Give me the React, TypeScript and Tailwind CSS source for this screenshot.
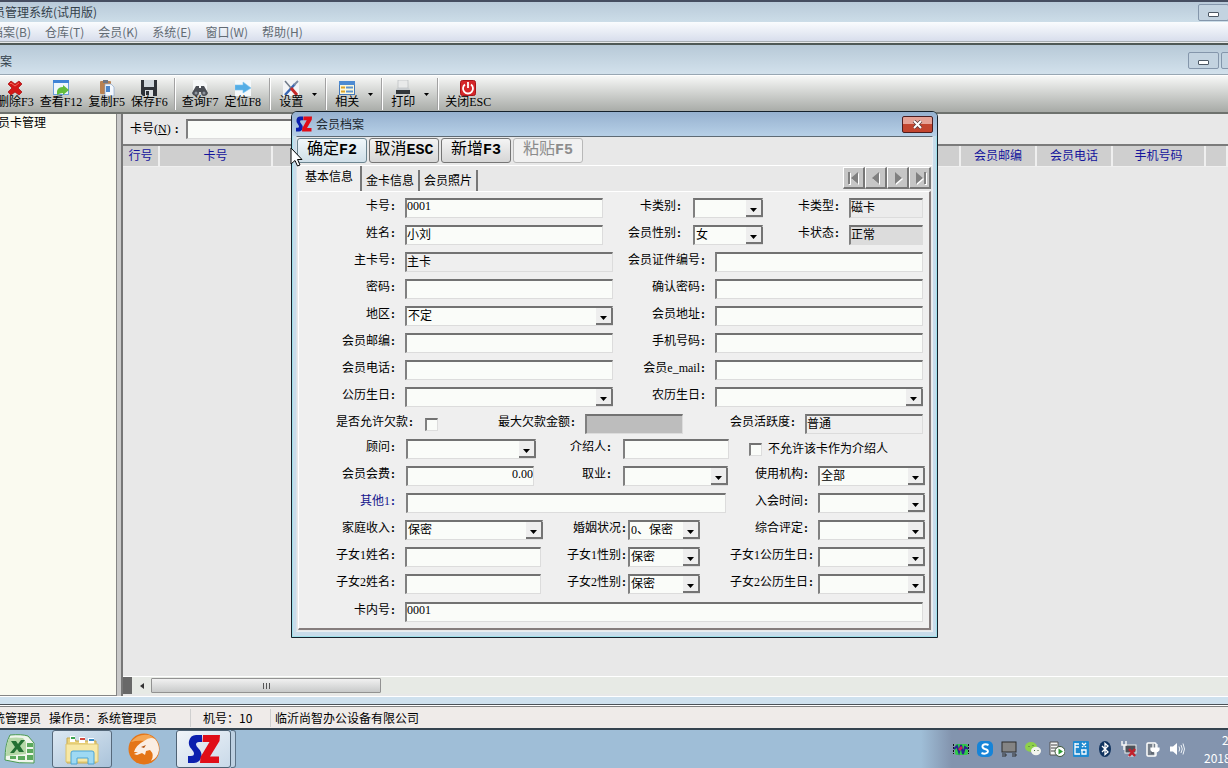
import { useId } from 'react';
import type { ReactNode } from 'react';

const song = "font-['Liberation_Serif','Noto_Sans_CJK_SC',serif]";
const yahei = "font-['Noto_Sans_CJK_SC',sans-serif]";
const sunken =
  'h-5 border-t-2 border-l-2 border-r border-b border-t-[#727272] border-l-[#808080] border-r-[#dcdcdc] border-b-[#dcdcdc] outline-none';

function Label({ id, width, text, blue }: { id: string; width: string; text: string; blue?: boolean }) {
  return (
    <label
      htmlFor={id}
      className={`${width} shrink-0 whitespace-nowrap pr-px pb-1 text-right leading-4 ${blue ? 'text-[#14148c]' : 'text-black'}`}
    >
      {text}
      <span className="inline-block w-1.5 text-center font-bold">:</span>
    </label>
  );
}

type FieldProps = {
  label: string;
  labelWidth: string;
  width: string;
  value?: string;
  gap?: string;
  bg?: string;
  right?: boolean;
  blue?: boolean;
  readOnly?: boolean;
  type?: string;
};

function TextField({ label, labelWidth, width, value = '', gap = 'gap-2', bg = 'bg-[#fafcf9]', right, blue, readOnly, type = 'text' }: FieldProps) {
  const id = useId();
  return (
    <div className={`flex items-center ${gap}`}>
      <Label id={id} width={labelWidth} text={label} blue={blue} />
      <input
        id={id}
        type={type}
        defaultValue={value}
        readOnly={readOnly}
        className={`${sunken} ${width} ${bg} pb-1 leading-4 ${right ? 'text-right' : ''}`}
      />
    </div>
  );
}

function SelectField({ label, labelWidth, width, value = '', gap = 'gap-2' }: FieldProps) {
  const id = useId();
  return (
    <div className={`flex items-center ${gap}`}>
      <Label id={id} width={labelWidth} text={label} />
      <div className={`relative ${width}`}>
        <select id={id} className={`${sunken} block w-full appearance-none bg-[#fafcf9] pb-[3px] pl-px leading-4`}>
          <option>{value}</option>
        </select>
        <span className="pointer-events-none absolute top-0.5 right-0 flex h-[17px] w-[17px] items-center justify-center border-r-2 border-b-2 border-[#747474] bg-[#eeeeee]">
          <svg width="7" height="4" viewBox="0 0 7 4" className="mt-1">
            <path d="M0 0H7L3.5 4Z" fill="#000" />
          </svg>
        </span>
      </div>
    </div>
  );
}

function Check({ id }: { id: string }) {
  return (
    <input
      id={id}
      type="checkbox"
      className="h-[13px] w-[13px] appearance-none border-t-2 border-l-2 border-r border-b border-t-[#727272] border-l-[#808080] border-r-[#dddddd] border-b-[#dddddd] bg-[#fafcf9]"
    />
  );
}

function SZ({ size }: { size: 'small' | 'large' }) {
  return (
    <svg viewBox="0 0 32 30" className={size === 'small' ? 'h-4 w-4' : 'h-[30px] w-8'} preserveAspectRatio="none">
      <path
        d="M14 1V8H11Q8 8 8 10.500Q8 12 10.500 14.500Q14 18 13.500 22.500Q12 29 6 29H0V22H3Q6 22 6 19.500Q6 18 3.500 15Q0 11.500 1 7Q2.500 1 8 1Z"
        fill="#0b20ae"
      />
      <path d="M15 1H32L31.500 7L22 22.500H31V29H12L12.500 23L21.500 8H14.500Z" fill="#e00d18" />
    </svg>
  );
}

/* ---------- toolbar ---------- */

const DeleteIcon = (
  <svg width="16" height="16" viewBox="0 0 16 16">
    <path d="M1 4L4 1L8 4L12 1L15 4L11 8L15 12L12 15L8 12L4 15L1 12L5 8Z" fill="#d41717" stroke="#a30d0d" strokeWidth=".7" />
    <path d="M3 4L4 3L8 6L12 3" stroke="#f06a5c" fill="none" />
  </svg>
);
const ViewIcon = (
  <svg width="16" height="16" viewBox="0 0 16 16">
    <rect x=".5" y=".5" width="15" height="14" fill="#eef5fc" stroke="#6a9fdc" />
    <rect x="0" y="0" width="16" height="3" fill="#3f83d6" />
    <path d="M4 15V11Q5 7 10 7V5L16 10L10 15V13Q7 13 4 15Z" fill="#63bd3c" />
  </svg>
);
const CopyIcon = (
  <svg width="16" height="16" viewBox="0 0 16 16">
    <rect x="1" y="1" width="11" height="13" rx="1" fill="#b98152" />
    <rect x="4" y="0" width="5" height="3" fill="#6f7684" />
    <path d="M6 4H12L15 7V16H6Z" fill="#f4f8fd" stroke="#8aa7cb" strokeWidth=".7" />
    <rect x="7" y="6" width="4" height="6" fill="#4c86cc" />
  </svg>
);
const SaveIcon = (
  <svg width="16" height="16" viewBox="0 0 16 16">
    <path d="M0 0H16V16H2L0 14Z" fill="#2e3238" />
    <rect x="3" y="0" width="10" height="7" fill="#cfd6dc" />
    <rect x="4" y="10" width="8" height="6" fill="#d9dde0" />
    <rect x="5" y="11" width="3" height="4" fill="#2e3238" />
  </svg>
);
const FindIcon = (
  <svg width="16" height="16" viewBox="0 0 16 16">
    <path d="M1 0H11L15 4V10H1Z" fill="#f5f7f8" />
    <path d="M4 6H7V8H9V6H12L16 13Q15 16 12 16Q9 16 9 12H7Q7 16 4 16Q1 16 0 13Z" fill="#4a4e55" />
    <circle cx="4" cy="13" r="1.500" fill="#8c939d" />
    <circle cx="12" cy="13" r="1.500" fill="#8c939d" />
  </svg>
);
const LocateIcon = (
  <svg width="16" height="16" viewBox="0 0 16 16">
    <rect width="16" height="16" fill="#f4f8fa" />
    <path d="M0 5H8V2L16 8L8 13V10H0Z" fill="#55aee6" stroke="#7dc5f0" strokeWidth=".6" />
  </svg>
);
const SetupIcon = (
  <svg width="16" height="16" viewBox="0 0 16 16">
    <rect width="16" height="16" fill="#f3f4f6" />
    <path d="M2 15L12 4" stroke="#3867b4" strokeWidth="2.500" />
    <path d="M11 5L15 1" stroke="#7f8ea6" strokeWidth="2" />
    <path d="M2 1L8 8" stroke="#707b89" strokeWidth="1.500" />
    <path d="M8 8L14 15" stroke="#c62828" strokeWidth="3" />
  </svg>
);
const RelatedIcon = (
  <svg width="16" height="16" viewBox="0 0 16 16">
    <rect x=".5" y="1.500" width="15" height="13" fill="#fdf8d9" stroke="#4479bb" />
    <rect x="0" y="1" width="16" height="4" fill="#4d8bd2" />
    <path d="M2 7.500H6M2 11.500H6" stroke="#d9a32b" strokeWidth="2" />
    <path d="M7 7.500H14M7 11.500H14" stroke="#5d94cf" strokeWidth="2" />
  </svg>
);
const PrintIcon = (
  <svg width="16" height="16" viewBox="0 0 16 16">
    <path d="M3 0H13V8H3Z" fill="#e9eaea" stroke="#b3b6b8" strokeWidth=".6" />
    <path d="M2 8H14L15 10H1Z" fill="#c8cccf" />
    <rect x="1" y="10" width="14" height="4" fill="#33373a" />
  </svg>
);
const CloseIcon = (
  <svg width="16" height="16" viewBox="0 0 16 16">
    <rect x=".5" y=".5" width="15" height="15" rx="2" fill="#d5262a" stroke="#a61519" />
    <path d="M5 4.500A5 5 0 1 0 11 4.500" fill="none" stroke="#fff" strokeWidth="1.800" />
    <path d="M8 2V8" stroke="#fff" strokeWidth="1.800" />
  </svg>
);

function Tool({ icon, text }: { icon: ReactNode; text: string }) {
  return (
    <button className="flex shrink-0 flex-col items-center whitespace-nowrap text-[12px] leading-3 text-black">
      {icon}
      <span>{text}</span>
    </button>
  );
}

function Sep() {
  return <span className="h-8 w-0.5 shrink-0 border-l border-r border-l-[#a2a2a2] border-r-white" />;
}

function Caret() {
  return (
    <button aria-label="更多" className="flex h-8 w-[22px] items-center justify-center">
      <svg width="5" height="3" viewBox="0 0 5 3">
        <path d="M0 0H5L2.500 3Z" />
      </svg>
    </button>
  );
}

function Minimize() {
  return (
    <button aria-label="最小化" className="flex h-[17px] w-[31px] shrink-0 items-center justify-center rounded-[2px] border border-[#8496ab] bg-[#c3d3e0]">
      <span className="mt-1 h-[5px] w-[11px] rounded-[1px] border border-[#4c5864] bg-white" />
    </button>
  );
}

/* ---------- dialog ---------- */

function DialogButton({ children, disabled, primary }: { children: ReactNode; disabled?: boolean; primary?: boolean }) {
  return (
    <button
      disabled={disabled}
      className={`h-[25px] w-[70px] rounded-[3px] border font-['Liberation_Mono','Noto_Sans_CJK_SC',monospace] text-[16px] leading-5 whitespace-nowrap ${
        disabled
          ? 'border-[#b8b8b8] bg-[#f1f1f1] text-[#8c8c8c]'
          : primary
            ? 'border-[#6d8590] bg-linear-to-b from-[#f1f7fa] to-[#cfdfe8] text-black'
            : 'border-[#757575] bg-linear-to-b from-[#f4f4f4] to-[#d6d6d6] text-black'
      }`}
    >
      {children}
    </button>
  );
}

function Key({ children }: { children: string }) {
  return <span className="text-[15px] font-bold">{children}</span>;
}

function NavButton({ label, path }: { label: string; path: string }) {
  return (
    <button aria-label={label} className="flex h-[22px] w-[22px] items-center justify-center border-t border-l border-r-2 border-b-2 border-t-white border-l-white border-r-[#777777] border-b-[#777777] bg-[#c6c6c6]">
      <svg width="14" height="14" viewBox="0 0 14 14">
        <path d={path} transform="translate(1 1)" fill="#fff" />
        <path d={path} fill="#808080" />
      </svg>
    </button>
  );
}

function MemberForm() {
  const debt = useId();
  const refuse = useId();
  return (
    <form className="flex flex-col pl-px text-[12px] text-black">
      <div className="flex flex-col gap-[7px]">
        {[
          { a: '卡号', av: '0001', b: '卡类别', bv: '', c: '卡类型', cv: '磁卡', bg: 'bg-[#ececec]' },
          { a: '姓名', av: '小刘', b: '会员性别', bv: '女', c: '卡状态', cv: '正常', bg: 'bg-[#dcdcdc]' },
        ].map((r) => (
          <div key={r.a} className="flex">
            <TextField label={r.a} labelWidth="w-[97px]" width="w-[198px]" value={r.av} />
            <SelectField label={r.b} labelWidth="w-[80px]" width="w-[70px]" gap="gap-[10px]" value={r.bv} />
            <TextField label={r.c} labelWidth="w-[78px]" width="w-[74px]" value={r.cv} bg={r.bg} readOnly />
          </div>
        ))}
        <div className="flex">
          <TextField label="主卡号" labelWidth="w-[97px]" width="w-[208px]" value="主卡" bg="bg-[#efefef]" readOnly />
          <TextField label="会员证件编号" labelWidth="w-[94px]" width="w-[208px]" />
        </div>
        <div className="flex">
          <TextField label="密码" labelWidth="w-[97px]" width="w-[208px]" type="password" />
          <TextField label="确认密码" labelWidth="w-[94px]" width="w-[208px]" type="password" />
        </div>
        <div className="flex">
          <SelectField label="地区" labelWidth="w-[97px]" width="w-[208px]" value="不定" />
          <TextField label="会员地址" labelWidth="w-[94px]" width="w-[208px]" />
        </div>
        <div className="flex">
          <TextField label="会员邮编" labelWidth="w-[97px]" width="w-[208px]" />
          <TextField label="手机号码" labelWidth="w-[94px]" width="w-[208px]" />
        </div>
        <div className="flex">
          <TextField label="会员电话" labelWidth="w-[97px]" width="w-[208px]" />
          <TextField label="会员e_mail" labelWidth="w-[94px]" width="w-[208px]" />
        </div>
        <div className="flex">
          <SelectField label="公历生日" labelWidth="w-[97px]" width="w-[208px]" />
          <SelectField label="农历生日" labelWidth="w-[94px]" width="w-[208px]" />
        </div>
        <div className="flex items-center">
          <div className="flex items-center gap-[10px]">
            <Label id={debt} width="w-[115px]" text="是否允许欠款" />
            <Check id={debt} />
          </div>
          <TextField label="最大欠款金额" labelWidth="w-[139px]" width="w-[98px]" bg="bg-[#bdbdbd]" readOnly />
          <TextField label="会员活跃度" labelWidth="w-[114px]" width="w-[118px]" value="普通" bg="bg-[#efefef]" readOnly />
        </div>
      </div>

      <div className="mt-[5px] flex">
        <div className="flex w-[430px] shrink-0 flex-col gap-[7px]">
          <div className="flex">
            <SelectField label="顾问" labelWidth="w-[97px]" width="w-[130px]" gap="gap-[9px]" />
            <TextField label="介绍人" labelWidth="w-[77px]" width="w-[106px]" gap="gap-[10px]" />
          </div>
          <div className="flex">
            <TextField label="会员会费" labelWidth="w-[97px]" width="w-[128px]" gap="gap-[9px]" value="0.00" right />
            <SelectField label="取业" labelWidth="w-[79px]" width="w-[105px]" gap="gap-[10px]" />
          </div>
          <TextField label="其他1" labelWidth="w-[97px]" width="w-[320px]" gap="gap-[9px]" blue />
          <div className="flex">
            <SelectField label="家庭收入" labelWidth="w-[97px]" width="w-[138px]" value="保密" />
            <SelectField label="婚姻状况" labelWidth="w-[85px]" width="w-[72px]" gap="gap-0" value="0、保密" />
          </div>
          <div className="flex">
            <TextField label="子女1姓名" labelWidth="w-[97px]" width="w-[136px]" />
            <SelectField label="子女1性别" labelWidth="w-[87px]" width="w-[72px]" gap="gap-0" value="保密" />
          </div>
          <div className="flex">
            <TextField label="子女2姓名" labelWidth="w-[97px]" width="w-[136px]" />
            <SelectField label="子女2性别" labelWidth="w-[87px]" width="w-[72px]" gap="gap-0" value="保密" />
          </div>
        </div>
        <div className="flex flex-col gap-[7px]">
          <div className="flex h-5 items-center gap-1.5 pl-[19px]">
            <Check id={refuse} />
            <label htmlFor={refuse}>不允许该卡作为介绍人</label>
          </div>
          <SelectField label="使用机构" labelWidth="w-[80px]" width="w-[107px]" value="全部" />
          <SelectField label="入会时间" labelWidth="w-[80px]" width="w-[107px]" />
          <SelectField label="综合评定" labelWidth="w-[80px]" width="w-[107px]" />
          <SelectField label="子女1公历生日" labelWidth="w-[80px]" width="w-[107px]" />
          <SelectField label="子女2公历生日" labelWidth="w-[80px]" width="w-[107px]" />
        </div>
      </div>

      <div className="mt-2">
        <TextField label="卡内号" labelWidth="w-[97px]" width="w-[518px]" value="0001" />
      </div>
    </form>
  );
}

function Dialog() {
  return (
    <section
      role="dialog"
      aria-label="会员档案"
      className="absolute top-[111px] left-[291px] w-[647px] rounded-t-[6px] border border-[#15212b] bg-[#c8dcea] shadow-[inset_0_0_0_1px_#9fe0ea]"
    >
      <header className="flex h-6 items-center justify-between rounded-t-[5px] bg-linear-to-b from-[#96b1cf] to-[#b7d0e7] pr-1 pl-1">
        <div className="flex items-center gap-1">
          <SZ size="small" />
          <h1 className={`text-[12px] text-[#1c2730] ${yahei}`}>会员档案</h1>
        </div>
        <button aria-label="关闭" className="flex h-[17px] w-[31px] items-center justify-center rounded-[2px] border border-[#4b1d20] bg-linear-to-b from-[#e6a296] from-50% to-[#c2452f] to-50%">
          <svg width="11" height="9" viewBox="0 0 11 9">
            <path d="M2 1L9 8M9 1L2 8" stroke="#5a3a3a" strokeWidth="3.500" />
            <path d="M2 1L9 8M9 1L2 8" stroke="#fff" strokeWidth="2" />
          </svg>
        </button>
      </header>
      <div className="mx-1 mb-[5px] border border-t-[#5e6a74] border-l-[#d9e3e9] border-r-[#e8eef2] border-b-[#e8eef2] bg-[#e8e8e8]">
        <div className="flex gap-0.5 border-b border-white pt-px pb-0.5">
          <DialogButton primary>
            确定<Key>F2</Key>
          </DialogButton>
          <DialogButton>
            取消<Key>ESC</Key>
          </DialogButton>
          <DialogButton>
            新增<Key>F3</Key>
          </DialogButton>
          <DialogButton disabled>
            粘贴<Key>F5</Key>
          </DialogButton>
        </div>
        <div className="flex items-end justify-between pr-px">
          <div role="tablist" className="flex items-end text-[12px] text-black">
            <button role="tab" aria-selected="true" className="h-[25px] border-r-2 border-[#777777] bg-[#efefef] pr-[7px] pb-1 pl-2">
              基本信息
            </button>
            <button role="tab" className="h-[21px] border-r-2 border-[#777777] px-1">
              金卡信息
            </button>
            <button role="tab" className="h-[21px] border-r-2 border-[#777777] px-1">
              会员照片
            </button>
          </div>
          <div className="mb-0.5 flex">
            <NavButton label="首条" path="M1 1H3V13H1ZM11 1V13L4 7Z" />
            <NavButton label="上一条" path="M10 1V13L3 7Z" />
            <NavButton label="下一条" path="M4 1V13L11 7Z" />
            <NavButton label="末条" path="M11 1H13V13H11ZM3 1V13L10 7Z" />
          </div>
        </div>
        <div className="mx-px mb-px border-t border-l border-r-2 border-b-2 border-t-white border-l-white border-r-[#857d7d] border-b-[#857d7d] bg-[#efefef] py-1.5">
          <MemberForm />
        </div>
      </div>
    </section>
  );
}

/* ---------- taskbar ---------- */

const trayIcons: { name: string; art: ReactNode }[] = [
  {
    name: '监视器',
    art: (
      <>
        <rect x="2" y="3" width="13" height="11" rx="2" fill="#31c94a" />
        <path d="M0 3V13M16 3V13" stroke="#111" strokeWidth="2" strokeDasharray="2 1" />
        <path d="M1 8L4 5L6 11L8 4L10 13L12 6L15 8" fill="none" stroke="#2a2590" strokeWidth="2" />
        <path d="M6 9L9 6" stroke="#d21f55" strokeWidth="2.500" />
      </>
    ),
  },
  {
    name: '输入法',
    art: (
      <>
        <rect width="16" height="16" rx="5" fill="#1684d8" />
        <path d="M11.500 4Q8 2.500 5.800 4.200Q4.500 7 8 8Q12 9 10.500 11.500Q8 13.500 4.500 12" fill="none" stroke="#fff" strokeWidth="2" />
      </>
    ),
  },
  {
    name: '显示',
    art: (
      <>
        <rect x="1" y="1" width="14" height="10" fill="#848484" stroke="#2c2c2c" />
        <path d="M1 13H5V15H1M11 13H15V15H11" fill="none" stroke="#333" />
      </>
    ),
  },
  {
    name: '微信',
    art: (
      <>
        <ellipse cx="6" cy="6" rx="6" ry="5" fill="#8ed04b" />
        <ellipse cx="11" cy="10" rx="5" ry="4.200" fill="#f2f5ee" />
        <path d="M4 5V6M8 4V5M9.500 9V10M13 9V10" stroke="#45663a" />
      </>
    ),
  },
  {
    name: '服务',
    art: (
      <>
        <path d="M1 1H9V14H1Z" fill="#f3f3f3" stroke="#555" />
        <path d="M2 4H8M2 7H8M2 10H8" stroke="#444" />
        <circle cx="11" cy="10.500" r="5" fill="#fff" stroke="#3b5538" />
        <path d="M9.500 7.500V13.500L14 10.500Z" fill="#2c9d33" />
      </>
    ),
  },
  {
    name: '控制面板',
    art: (
      <>
        <rect width="16" height="16" rx="1" fill="#1f8ad0" />
        <path d="M2 3H6M2 6H6M2 2V13H7M9 2L13 6M13 2L9 6M8 9H13V13H9V9" fill="none" stroke="#fff" strokeWidth="1.300" />
      </>
    ),
  },
  {
    name: '蓝牙',
    art: (
      <>
        <ellipse cx="8" cy="8" rx="6" ry="8" fill="#10335f" />
        <path d="M5 5L11 11L8 13.500V2.500L11 5L5 11" fill="none" stroke="#fff" strokeWidth="1.300" />
      </>
    ),
  },
  {
    name: '网络',
    art: (
      <>
        <rect x="4" y="4" width="11" height="8" fill="#4d5259" stroke="#eee" />
        <path d="M1 0V4H5V0M3 4V9" fill="none" stroke="#f5f5f5" strokeWidth="1.500" />
        <path d="M7 15H13" stroke="#eee" />
        <path d="M8 8L14 15M14 8L8 15" stroke="#c4202b" strokeWidth="2.500" />
      </>
    ),
  },
  {
    name: '电源',
    art: (
      <>
        <rect x="2" y="2" width="9" height="13" rx="1" fill="#77808b" stroke="#fff" strokeWidth="1.500" />
        <path d="M8 3V7M12 3V7M6 7H14V9Q13 11 10 11Q7 11 6 9ZM10 11V15" fill="#fff" stroke="#fff" strokeWidth="1.200" />
        <path d="M6 12H9" stroke="#444c57" />
      </>
    ),
  },
  {
    name: '音量',
    art: (
      <>
        <path d="M1 5.500H4L8 2V14L4 10.500H1Z" fill="#fff" />
        <path d="M10 5.500Q11.500 8 10 10.500M12 4Q14.500 8 12 12M14 2.500Q17 8 14 13.500" fill="none" stroke="#edf2f7" />
      </>
    ),
  },
];

function Taskbar() {
  return (
    <footer className="flex h-10 shrink-0 items-stretch justify-between overflow-hidden border-t-2 border-[#34434f] bg-[#9fbed7]">
      <div className="flex items-stretch">
        <button aria-label="Excel" className="flex w-[52px] items-center pl-1">
          <svg width="32" height="30" viewBox="0 0 32 30">
            <path d="M6 1Q18 0 24 2L30 9V29Q15 30 1 26Q1 10 6 1Z" fill="#eff6ec" stroke="#4a9a50" />
            <path d="M5 4Q12 3 19 4L22 8V20L2 22Q2 12 5 4Z" fill="#b5d8a8" />
            <path d="M7 7H12L14 10L17 6H21L16 12L20 18H15L13 15L10 19H6L11 13Z" fill="#237033" />
            <path d="M23 9H29V13H23ZM23 15H29V19H23ZM23 21H29V26H23ZM6 22H12V25H6ZM14 22H21V26H14Z" fill="#5ba95d" />
          </svg>
        </button>
        <button aria-label="资源管理器" className="flex w-[60px] items-center justify-center rounded-[3px] border border-[#56697b] bg-linear-to-br from-[#dce8f2] to-[#aac3da]">
          <svg width="34" height="31" viewBox="0 0 34 31">
            <path d="M2 4H9L11 7H31V29H2Z" fill="#edd57d" stroke="#c4a850" />
            <path d="M5 2H10V8H5ZM14 3H20V9H14ZM23 4H29V10H23Z" fill="#fff" />
            <path d="M6 3H10V5H6Z" fill="#3ca552" />
            <path d="M15 4H20V6H15Z" fill="#d3483e" />
            <path d="M24 5H29V7H24Z" fill="#3b8cc5" />
            <path d="M1 10H33V28H1Z" fill="#f7e8a6" stroke="#dcc36d" />
            <path d="M6 30V19Q6 17 8 17H27Q29 17 29 19V30H23V24H12V30Z" fill="#9ed9f3" stroke="#4ca4d5" />
          </svg>
        </button>
        <button aria-label="浏览器" className="flex w-16 items-center justify-center">
          <svg width="32" height="32" viewBox="0 0 32 32">
            <circle cx="16" cy="16" r="15.500" fill="#e47517" />
            <path d="M3 9Q10 0 21 2Q31 6 31 17Q27 8 18 8Q9 7 3 9Z" fill="#f5a755" />
            <path d="M6 19Q8 12 16 8Q22 3 27 6Q31 11 31 17Q30 25 23 28Q27 22 22 17L18 18L17 22L14 20L9 22L6 21L10 19Z" fill="#fbeee3" />
            <path d="M13 14L18 12L16 15Z" fill="#b45312" />
          </svg>
        </button>
        <button aria-label="会员管理系统" className="flex w-[55px] items-center justify-center rounded-[3px] border border-[#4e6274] bg-linear-to-br from-[#f0f5fa] to-[#c9d9e8]">
          <SZ size="large" />
        </button>
        <span className="w-[5px] rounded-r-[3px] border-y border-r border-[#5c7286] bg-[#bdd0e1]" />
      </div>
      <div className="flex items-center bg-linear-to-r from-[#9fbed7] to-[#8394ae] to-10% pl-8">
        <div className="flex gap-2">
          {trayIcons.map((t) => (
            <button key={t.name} aria-label={t.name}>
              <svg width="16" height="16" viewBox="0 0 16 16">
                {t.art}
              </svg>
            </button>
          ))}
        </div>
        <div className="ml-[19px] w-6 overflow-hidden text-[12px] leading-[18px] whitespace-nowrap text-white">
          <div className="pl-[18px]">2</div>
          <div>2018</div>
        </div>
      </div>
    </footer>
  );
}

export default function App() {
  const cardNo = useId();
  return (
    <div className={`relative flex min-h-screen flex-col overflow-hidden bg-[#e8e8e8] ${yahei} text-[12px]`}>
      <header className="flex h-[22px] shrink-0 items-center justify-between overflow-hidden border-t-2 border-[#454d60] bg-linear-to-b from-[#b9cad9] to-[#ccdde8]">
        <div className="-ml-[7px] whitespace-nowrap text-[#33404a]">员管理系统(试用版)</div>
        <div className="-mr-px">
          <Minimize />
        </div>
      </header>
      <nav className="h-[19px] shrink-0 bg-linear-to-b from-[#fafcfe] to-[#d8deec] leading-4 text-[#626b73]">
        <div className="-ml-[9px] flex h-full items-center gap-[14px]">
          {['档案(B)', '仓库(T)', '会员(K)', '系统(E)', '窗口(W)', '帮助(H)'].map((m) => (
            <button key={m}>{m}</button>
          ))}
        </div>
      </nav>
      <div className="h-1 shrink-0 border-t border-b-2 border-t-[#a9b0b4] border-b-[#4f5956] bg-[#e6e8e8]" />
      <div className="flex h-[30px] shrink-0 items-center justify-between overflow-hidden border-b border-[#98a7b3] bg-linear-to-b from-[#b7c9d7] to-[#d2e1ec]">
        <span className="pt-0.5 text-[#33404a]">案</span>
        <div className="-mr-6 flex gap-0.5 pt-0.5">
          <Minimize />
          <Minimize />
        </div>
      </div>

      <div className={`flex h-[37px] shrink-0 items-center overflow-hidden border-t border-white bg-linear-to-b from-[#f7f8f7] to-[#a7aaa6] ${song}`}>
        <div className="-ml-[3px] flex items-center gap-1.5">
          <Tool icon={DeleteIcon} text="删除F3" />
          <Tool icon={ViewIcon} text="查看F12" />
          <Tool icon={CopyIcon} text="复制F5" />
          <Tool icon={SaveIcon} text="保存F6" />
          <Sep />
          <Tool icon={FindIcon} text="查询F7" />
          <Tool icon={LocateIcon} text="定位F8" />
        </div>
        <div className="flex items-center gap-2 pl-2">
          <Sep />
          <Tool icon={SetupIcon} text="设置" />
        </div>
        <Caret />
        <div className="flex items-center gap-2">
          <Sep />
          <Tool icon={RelatedIcon} text="相关" />
        </div>
        <Caret />
        <div className="flex items-center gap-2">
          <Sep />
          <Tool icon={PrintIcon} text="打印" />
        </div>
        <Caret />
        <div className="flex items-center gap-1.5">
          <Sep />
          <Tool icon={CloseIcon} text="关闭ESC" />
        </div>
      </div>

      <main className="flex flex-1 border-t-2 border-t-[#6e726e]">
        <aside className={`w-[117px] shrink-0 border-r border-b border-[#858585] bg-[#fafaf0] text-black ${song}`}>
          <a href="#cards" className="-ml-0.5 block leading-[18px]">
            员卡管理
          </a>
        </aside>
        <div className="w-1 shrink-0 bg-[#c9c9c9]" />
        <section className="flex min-w-0 flex-1 flex-col border-l-2 border-[#777777] pb-0.5">
          <div className={`flex h-8 items-center gap-2 border-b-2 border-[#7b7b7b] pl-[7px] text-black ${song}`}>
            <label htmlFor={cardNo} className="w-[48px] whitespace-nowrap">
              卡号(<u>N</u>)<span className="pl-1 font-bold">:</span>
            </label>
            <input id={cardNo} className={`${sunken} w-[198px] bg-[#fafcf9]`} />
          </div>
          <table className={`w-full table-fixed border-collapse text-[#14149c] ${song}`}>
            <colgroup>
              <col className="w-[36px]" />
              <col className="w-[113px]" />
              <col />
              <col className="w-[76px]" />
              <col className="w-[76px]" />
              <col className="w-[93px]" />
              <col className="w-[22px]" />
            </colgroup>
            <thead>
              <tr>
                {['行号', '卡号', '', '会员邮编', '会员电话', '手机号码', ''].map((h, i) => (
                  <th key={i} className="h-5 border-r-2 border-b border-[#efefef] bg-[#cfcfcf] p-0 leading-[14px] font-normal whitespace-nowrap">
                    {h}
                  </th>
                ))}
              </tr>
            </thead>
          </table>
          <div className="flex-1" />
          <div className="flex h-[18px] items-center border-t border-white bg-[#e7eae5]">
            <span className="h-[17px] w-[9px] bg-[#686868]" />
            <button aria-label="向左滚动" className="flex h-4 w-[19px] items-center justify-center">
              <svg width="4" height="6" viewBox="0 0 4 6">
                <path d="M4 0V6L0 3Z" fill="#333" />
              </svg>
            </button>
            <button aria-label="滚动条" className="flex h-[15px] w-[230px] items-center justify-center gap-0.5 rounded-[1px] border border-[#929292] bg-linear-to-b from-[#f1f1f1] to-[#c8caca]">
              <span className="h-1.5 w-px bg-[#555]" />
              <span className="h-1.5 w-px bg-[#555]" />
              <span className="h-1.5 w-px bg-[#555]" />
            </button>
          </div>
        </section>
      </main>

      <div className="h-[11px] shrink-0 border-t border-b border-t-white border-b-[#808080] bg-white">
        <div className="h-2 border-b border-[#4b5157] bg-[#cfe1ee]" />
      </div>
      <div className="flex h-[21px] shrink-0 items-center bg-[#efebe9] whitespace-nowrap text-black">
        <span className="-ml-[7px]">统管理员</span>
        <span className="ml-2 w-[142px] border-r border-[#cfcfcf]">操作员：系统管理员</span>
        <span className="w-20 border-r border-[#cfcfcf] pl-3">机号：10</span>
        <span className="pl-1">临沂尚智办公设备有限公司</span>
      </div>
      <Taskbar />

      <div className={song}>
        <Dialog />
      </div>
      <svg width="13" height="20" viewBox="0 0 13 20" className="absolute top-[147px] left-[290px]">
        <path d="M1 1V17L5 13.500L7.500 19L10 18L7.500 12.500H12Z" fill="#fff" stroke="#000" />
      </svg>
    </div>
  );
}
